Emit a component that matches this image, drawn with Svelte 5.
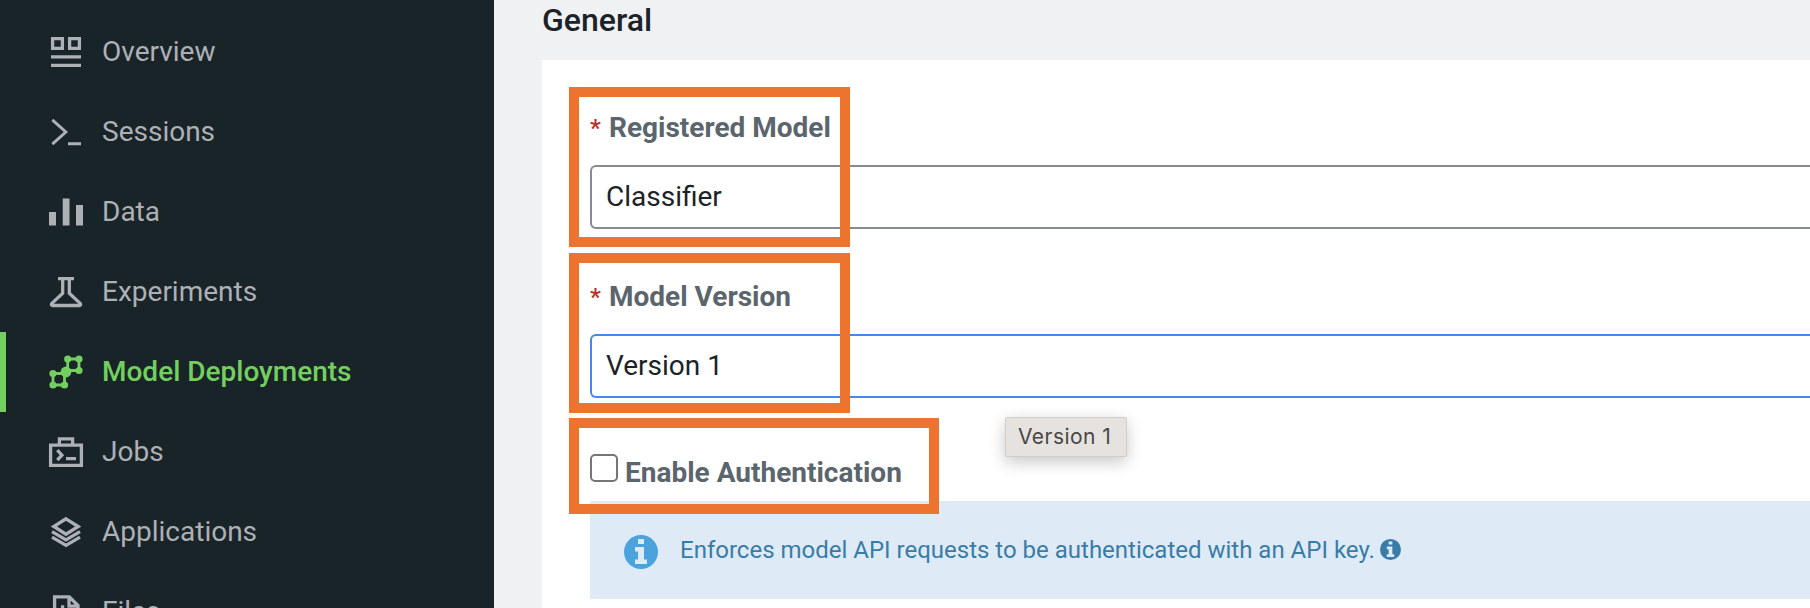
<script>
  const items = ['Overview', 'Sessions', 'Data', 'Experiments', 'Model Deployments', 'Jobs', 'Applications', 'Files'];
  const active = 'Model Deployments';
</script>

{#snippet info(size)}
  <svg class="info" width={size} height={size} viewBox="0 0 34 34">
    <circle cx="17" cy="17" r="17" fill="currentColor" />
    <path d="M14 4h6v5h-6zM11 12h9v12.5h3v4.5H11v-4.500h3v-8h-3z" fill="#deebf7" />
  </svg>
{/snippet}

<div class="page">
  <nav>
    {#each items as name}
      <a class:active={name === active}>
        <svg width="36" height="36" viewBox="0 0 36 36" fill="none" stroke="currentColor" stroke-width="3.3">
          {#if name === 'Overview'}
            <path d="M4.6 4.6h9.8v9.8H4.6zM21.6 4.6h9.8v9.8H21.6zM3 22.9h30M3 31.400h30" />
          {:else if name === 'Sessions'}
            <path stroke-width="3" d="M4.300 5.800 17.800 18 4.300 30.200M20 29.800h13" />
          {:else if name === 'Data'}
            <path fill="currentColor" stroke="none" d="M1 18h7v13.500H1zM14.700 4.500h6.800v27h-6.800zM28 11h7v20.500h-7z" />
          {:else if name === 'Experiments'}
            <path d="M10 4.600h16M14.700 4.500v14.700L3.600 29.600Q2.900 31.500 4.600 31.500h26.800q1.700 0 1-1.900L21.300 19.200V4.500" />
          {:else if name === 'Model Deployments'}
            <path stroke-width="2.800" d="M19.700 5h11.300v11.500H19.700zM5 19.500h11.500V31H5z" />
            <g fill="currentColor" stroke="none">
              <circle cx="19.700" cy="5" r="3.600" /><circle cx="31" cy="5" r="3.600" /><circle cx="31" cy="16.500" r="3.600" />
              <circle cx="18" cy="18" r="5.400" />
              <circle cx="5" cy="19.500" r="3.600" /><circle cx="5" cy="31" r="3.600" /><circle cx="16.500" cy="31" r="3.600" />
            </g>
          {:else if name === 'Jobs'}
            <path d="M2.600 11.200h30.800v20.200H2.600zM11.400 11V4.800h13.200V11M9.300 16.200l4.600 5-4.600 5M18 24.700h10" />
          {:else if name === 'Applications'}
            <path d="M18 4.800 30.200 12.500 18 20.200 5.800 12.500zM4 17.600 18 25.800 32 17.600M4 23.100 18 31.300 32 23.100" />
          {:else}
            <path d="M6.600 36V2.800h14.700L30 11.500V36M21 3v9.200h9M14.600 11.200V36" />
          {/if}
        </svg>
        <span>{name}</span>
      </a>
    {/each}
  </nav>

  <main>
    <h2>General</h2>
    <section>
      <div class="label"><i>*</i>Registered Model</div>
      <div class="field">Classifier</div>
      <div class="label second"><i>*</i>Model Version</div>
      <div class="field focus">Version 1</div>
      <div class="check"><span class="box"></span><b>Enable Authentication</b></div>
      <div class="alert">
        {@render info(34)}
        <p>Enforces model API requests to be authenticated with an API key.</p>
        <span class="hint">{@render info(21)}</span>
      </div>
    </section>
  </main>

  <div class="mark m1"></div>
  <div class="mark m2"></div>
  <div class="mark m3"></div>
  <div class="tooltip">Version 1</div>
</div>

<style>
  .page {
    position: relative;
    display: flex;
    width: 1810px;
    height: 608px;
    overflow: hidden;
    background: #f0f1f3;
    font: 28px/40px Roboto, sans-serif;
    color: #1b2329;
  }
  nav {
    flex: 0 0 494px;
    padding-top: 12px;
    box-sizing: border-box;
    background: #192429;
    color: #adb0b5;
  }
  nav a {
    display: flex;
    align-items: center;
    gap: 18px;
    height: 80px;
    padding-left: 48px;
    box-sizing: border-box;
  }
  nav a.active {
    padding-left: 42px;
    border-left: 6px solid #74cf60;
    color: #74cf60;
    font-weight: 500;
  }
  svg { flex: none; display: block; }
  main { flex: 1; padding-left: 48px; }
  h2 {
    margin: 0;
    height: 60px;
    font-size: 32px;
    font-weight: 500;
    line-height: 40px;
  }
  section {
    height: 548px;
    padding: 48px 0 0 48px;
    box-sizing: border-box;
    background: #fff;
  }
  .label {
    display: flex;
    height: 57px;
    font-weight: 700;
    color: #5b656d;
  }
  .label i {
    width: 19px;
    font: 600 24px/40px Roboto, sans-serif;
    color: #b9332f;
  }
  .label.second { margin-top: 48px; }
  .field {
    height: 64px;
    box-sizing: border-box;
    padding: 10px 14px;
    border: 2px solid #858b92;
    border-right: 0;
    border-radius: 6px 0 0 6px;
  }
  .field.focus { border-color: #4089f0; }
  .check {
    display: flex;
    height: 103px;
    padding-top: 56px;
    box-sizing: border-box;
    color: #5b656d;
  }
  .box {
    width: 28px;
    height: 28px;
    margin-right: 7px;
    box-sizing: border-box;
    border: 2px solid #767676;
    border-radius: 5px;
  }
  .check b { line-height: 38px; }
  .alert {
    display: flex;
    height: 98px;
    padding: 34px 0 0 34px;
    box-sizing: border-box;
    background: #deebf7;
    color: #4aa3dc;
  }
  .alert p {
    margin: 0 5px 0 22px;
    font-size: 24px;
    line-height: 30px;
    color: #397ca8;
  }
  .hint { padding-top: 4px; color: #397ca8; }
  .mark {
    position: absolute;
    left: 569px;
    width: 281px;
    height: 160px;
    box-sizing: border-box;
    border: 10px solid #ed742f;
  }
  .m1 { top: 87px; }
  .m2 { top: 253px; }
  .m3 { top: 418px; width: 370px; height: 96px; }
  .tooltip {
    position: absolute;
    left: 1005px;
    top: 417px;
    width: 122px;
    height: 40px;
    padding-left: 12px;
    box-sizing: border-box;
    border: 1px solid #cfccca;
    border-radius: 2px;
    background: #e6e2df;
    box-shadow: 0 5px 16px rgba(0, 0, 0, 0.22);
    font: 21px/38px Inter, sans-serif;
    letter-spacing: 0.45px;
    color: #494745;
  }
</style>
